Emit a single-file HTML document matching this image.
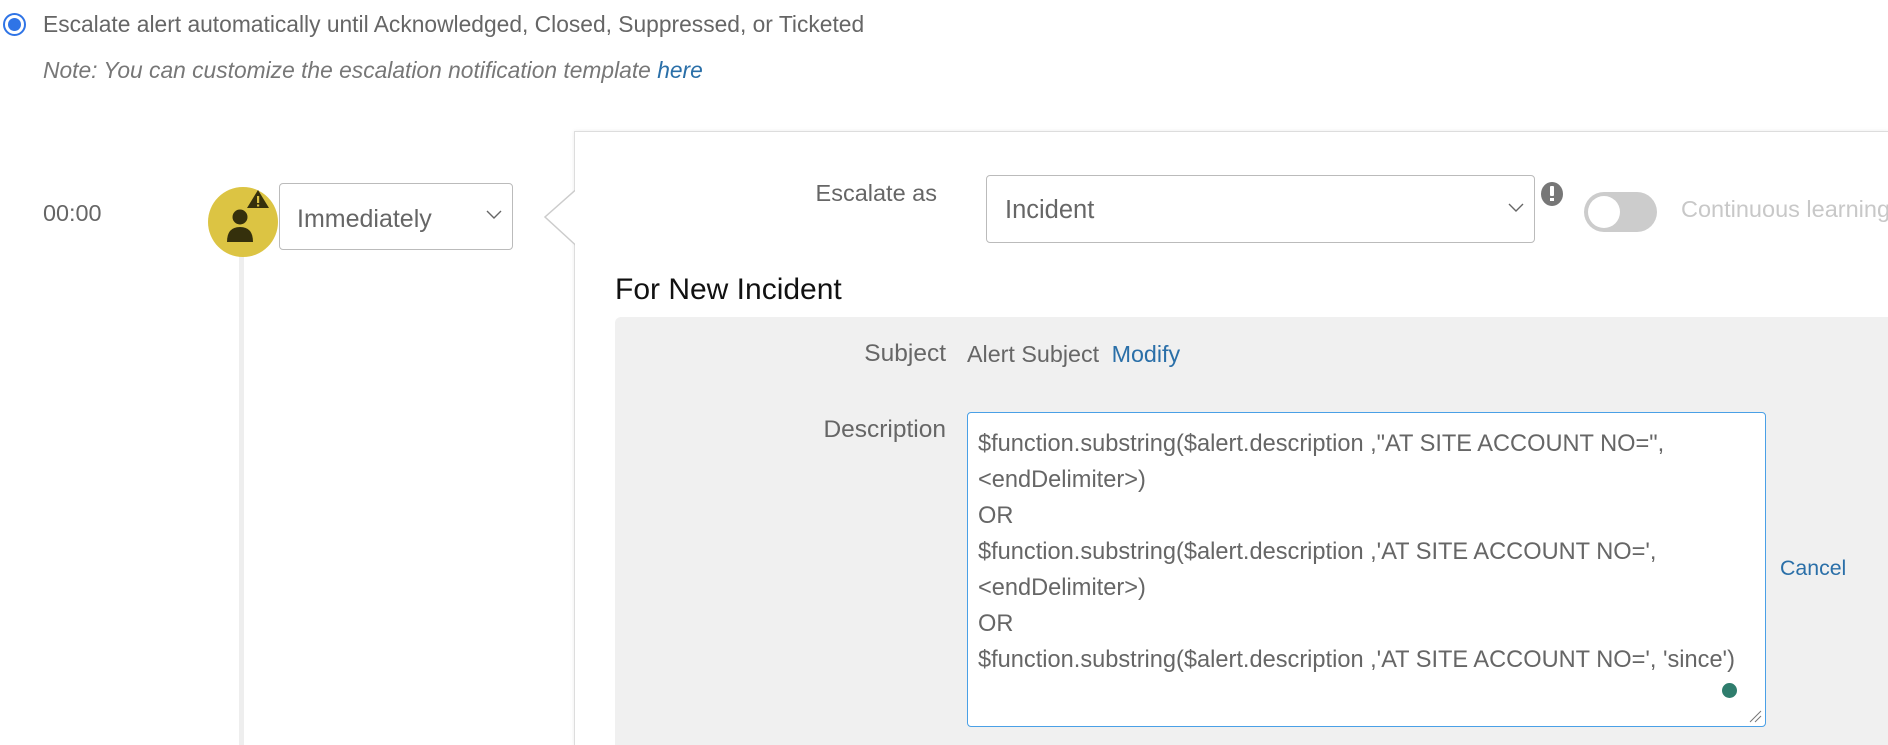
<!DOCTYPE html>
<html><head><meta charset="utf-8"><style>
*{box-sizing:border-box;margin:0;padding:0}
html,body{width:1888px;height:745px;overflow:hidden}
body{background:#fff;position:relative;font-family:"Liberation Sans",sans-serif;color:#666}
.abs{position:absolute}
.t{white-space:nowrap;line-height:30px;height:30px}
</style></head><body>
<div class="abs" style="left:3px;top:13px;width:23px;height:23px;border:2px solid #2f74e6;border-radius:50%"></div>
<div class="abs" style="left:8px;top:18px;width:13px;height:13px;background:#2f74e6;border-radius:50%"></div>
<div class="abs t" style="left:43px;top:9px;font-size:22.8px;color:#666">Escalate alert automatically until Acknowledged, Closed, Suppressed, or Ticketed</div>
<div class="abs t" style="left:43px;top:55px;font-size:22.8px;font-style:italic;color:#777">Note: You can customize the escalation notification template <span style="color:#2a6fa8">here</span></div>

<div class="abs t" style="left:43px;top:198px;font-size:23.4px;color:#666">00:00</div>
<div class="abs" style="left:239px;top:250px;width:5px;height:495px;background:#eee"></div>
<div class="abs" style="left:208px;top:187px;width:70px;height:70px;border-radius:50%;background:#dcc443"></div>
<svg class="abs" style="left:208px;top:187px" width="80" height="70" viewBox="0 0 80 70">
<circle cx="32" cy="30" r="7.5" fill="#35300c"/>
<path d="M19 55 Q19 40 32 40 Q45 40 45 55 Z" fill="#35300c"/>
<path d="M50 3 L61 21 L39 21 Z" fill="#35300c"/>
<rect x="49" y="9" width="2.2" height="7" fill="#dcc443"/><rect x="49" y="17.5" width="2.2" height="2" fill="#dcc443"/>
</svg>
<div class="abs" style="left:279px;top:183px;width:234px;height:67px;border:1.5px solid #bbb;border-radius:4px;background:#fff"></div>
<div class="abs t" style="left:297px;top:204px;font-size:25px;color:#666">Immediately</div>
<svg class="abs" style="left:486px;top:210px" width="16" height="10"><path d="M1 1 L8 8 L15 1" fill="none" stroke="#666" stroke-width="1.4"/></svg>

<div class="abs" style="left:574px;top:131px;width:1314px;height:614px;border:1.5px solid #ddd;border-right:none;border-bottom:none;background:#fff;box-shadow:0 0 4px rgba(0,0,0,.08)"></div>
<svg class="abs" style="left:544px;top:190px" width="32" height="56"><path d="M31.5 0 L1 27 L31.5 55" fill="#fff" stroke="#ccc" stroke-width="1.5"/><rect x="31" y="0" width="2" height="56" fill="#fff"/></svg>

<div class="abs t" style="left:700px;top:178px;width:237px;text-align:right;font-size:23.5px;color:#666">Escalate as</div>
<div class="abs" style="left:986px;top:175px;width:549px;height:68px;border:1.5px solid #bbb;border-radius:4px;background:#fff"></div>
<div class="abs t" style="left:1005px;top:195px;font-size:25.5px;color:#666">Incident</div>
<svg class="abs" style="left:1508px;top:203px" width="16" height="10"><path d="M1 1 L8 8 L15 1" fill="none" stroke="#666" stroke-width="1.4"/></svg>
<div class="abs" style="left:1541px;top:182px;width:22px;height:24px;border-radius:50%;background:#777"></div>
<div class="abs" style="left:1550px;top:186px;width:4px;height:10px;background:#fff;border-radius:1px"></div>
<div class="abs" style="left:1550px;top:198px;width:4px;height:3px;background:#fff"></div>
<div class="abs" style="left:1584px;top:192px;width:73px;height:40px;border-radius:20px;background:#ccc"></div>
<div class="abs" style="left:1588px;top:196px;width:32px;height:32px;border-radius:50%;background:#fff"></div>
<div class="abs t" style="left:1681px;top:194px;font-size:23.5px;color:#c8c8c8">Continuous learning</div>

<div class="abs t" style="left:615px;top:275px;font-size:30px;color:#111">For New Incident</div>
<div class="abs" style="left:615px;top:317px;width:1273px;height:428px;background:#f0f0f0;border-radius:6px 0 0 0"></div>
<div class="abs t" style="left:780px;top:339px;width:166px;text-align:right;font-size:24.5px;color:#666">Subject</div>
<div class="abs t" style="left:967px;top:339px;font-size:23.3px;color:#666">Alert Subject <span style="color:#2a6fa8;margin-left:6px">Modify</span></div>
<div class="abs t" style="left:780px;top:415px;width:166px;text-align:right;font-size:24.5px;color:#666">Description</div>
<div class="abs" style="left:967px;top:412px;width:799px;height:315px;border:1.5px solid #4aa0e6;border-radius:4px;background:#fff"></div>
<div class="abs" style="left:978px;top:426px;font-size:23.6px;line-height:36px;color:#666;white-space:pre">$function.substring($alert.description ,"AT SITE ACCOUNT NO=",
&lt;endDelimiter&gt;)
OR
$function.substring($alert.description ,'AT SITE ACCOUNT NO=',
&lt;endDelimiter&gt;)
OR
$function.substring($alert.description ,'AT SITE ACCOUNT NO=', 'since')</div>
<div class="abs" style="left:1722px;top:683px;width:15px;height:15px;border-radius:50%;background:#2f7d6d"></div>
<svg class="abs" style="left:1748px;top:709px" width="14" height="14"><path d="M2 13 L13 2 M7 13 L13 7" stroke="#777" stroke-width="1"/></svg>
<div class="abs t" style="left:1780px;top:553px;font-size:21.3px;color:#2a6fa8">Cancel</div>
</body></html>
